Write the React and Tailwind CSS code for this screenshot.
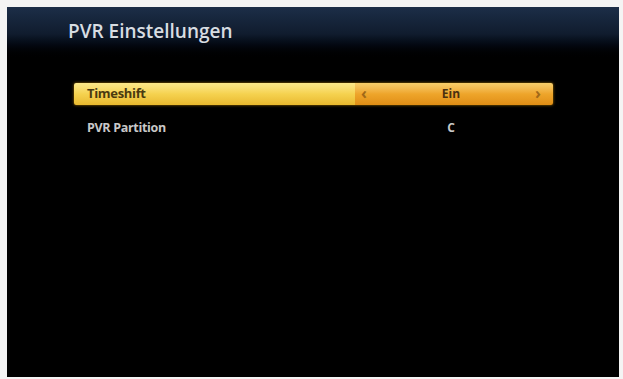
import React from "react";

const App = () => {
  return (
    <div
      className="w-[623px] h-[379px] bg-[#f4f4f4] pt-[7px] pl-[7px] pr-[4px] pb-[2px] overflow-hidden"
      style={{ fontFamily: '"Open Sans", "DejaVu Sans", sans-serif' }}
    >
      <div className="w-full h-full bg-black flex flex-col">
        {/* header */}
        <div className="h-[54px] bg-gradient-to-b from-[#1c2e48] via-[#101c2e] to-[#000000] pl-[61px] pt-[10px]">
          <span className="text-[19px] font-semibold text-[#d8dde2]">
            PVR Einstellungen
          </span>
        </div>

        {/* settings list */}
        <div className="pt-[22px] pl-[67px] pr-[66px] flex flex-col gap-[15px]">
          <div className="h-[22px] flex items-stretch rounded-[2px] overflow-hidden shadow-[0_0_3px_#a87400]">
            <div className="w-[281px] bg-gradient-to-b from-[#fde98a] via-[#f5d24f] to-[#e9b92e] flex items-center pl-[13px]">
              <span className="text-[13px] font-bold text-[#4a3a10] tracking-tight">Timeshift</span>
            </div>
            <div className="flex-1 bg-gradient-to-b from-[#f8cf6a] via-[#eea52a] to-[#e08e15] flex items-center justify-between pl-[6px] pr-[12px]">
              <span className="text-[16px] leading-[16px] pb-[3px] font-bold text-[#a06818]">‹</span>
              <span className="text-[12px] font-bold text-[#4a3010]">Ein</span>
              <span className="text-[16px] leading-[16px] pb-[3px] font-bold text-[#a06818]">›</span>
            </div>
          </div>
          <div className="h-[16px] flex items-center">
            <span className="w-[281px] pl-[13px] text-[12.5px] font-bold text-[#c8c8c8] tracking-tight">PVR Partition</span>
            <span className="flex-1 text-center text-[12px] font-bold text-[#c8c8c8] pr-[6px]">C</span>
          </div>
        </div>
      </div>
    </div>
  );
};

export default App;
